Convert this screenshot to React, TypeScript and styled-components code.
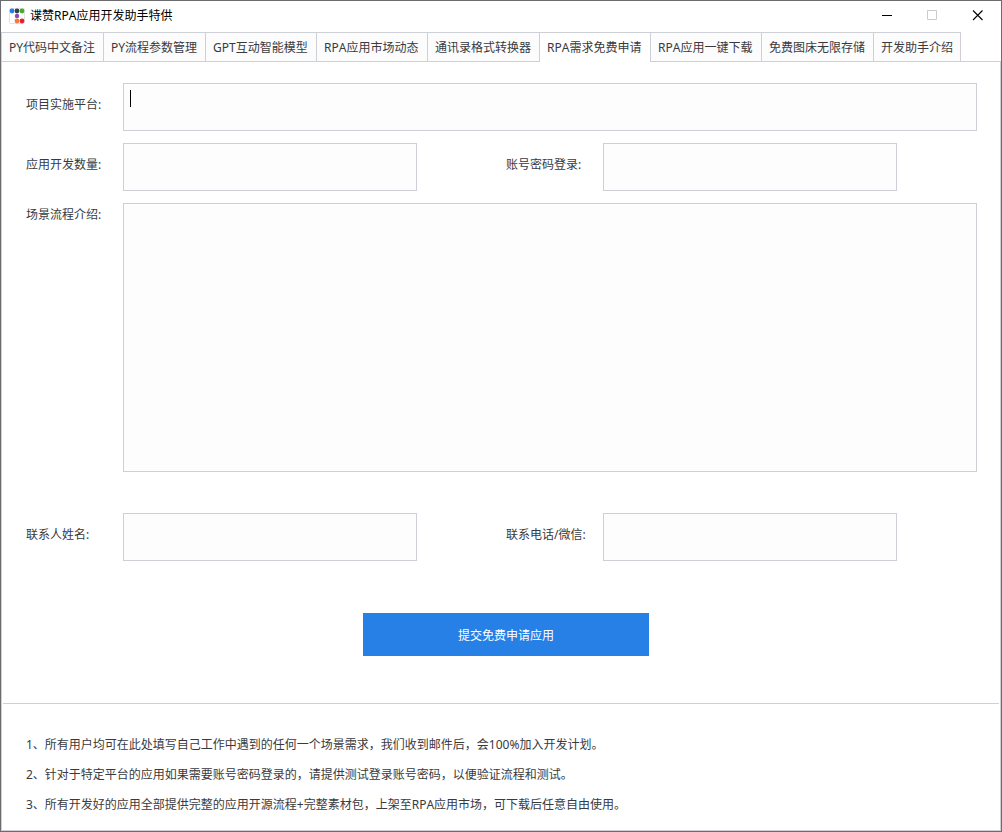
import React, { useState } from 'react';
import styled, { createGlobalStyle, css } from 'styled-components';

const GlobalStyle = createGlobalStyle`
  *, *::before, *::after { box-sizing: border-box; }
  body {
    margin: 0;
    background: #ffffff;
    color: #383a3e;
    font: 12px/18px "Noto Sans", "Noto Sans CJK SC", sans-serif;
    font-kerning: none;
  }
  button, input, textarea { font: inherit; font-kerning: inherit; color: inherit; }
`;

const line = '#cdd0d4';

const Window = styled.main`
  display: flex;
  flex-direction: column;
  min-height: 100vh;
  background: #ffffff;
  border: 1px solid #6c6c6f;
`;

const TitleBar = styled.header`
  display: flex;
  align-items: center;
  height: 31px;
  padding: 0 1px 2px 8px;
`;

const Title = styled.h1`
  flex: 1;
  margin: 0 0 0 5px;
  font-size: 12px;
  font-weight: 400;
  line-height: 18px;
  color: #000000;
`;

const WindowButton = styled.button`
  display: grid;
  place-items: center;
  width: 45px;
  height: 29px;
  padding: 0;
  border: 0;
  background: transparent;
  color: #000000;

  &:disabled { color: #cccccc; }
`;

const TabList = styled.div`
  display: flex;
  height: 30px;

  &::after {
    content: '';
    flex: 1;
    box-shadow: inset 0 -1px ${line};
  }
`;

const Tab = styled.button<{ $active: boolean; $width: number }>`
  flex: none;
  width: ${({ $width }) => $width}px;
  padding: 1px 0 0 7px;
  border: solid ${line};
  border-width: 1px 0 0 1px;
  background: #fcfcfd;
  box-shadow: inset 0 -1px ${line};
  text-align: left;
  white-space: nowrap;

  &:last-of-type { border-right-width: 1px; }

  ${({ $active }) => $active && css`
    background: #ffffff;
    box-shadow: none;
  `}
`;

const Panel = styled.section`
  flex: 1;
  border: solid ${line};
  border-width: 0 1px 1px;
`;

const Form = styled.form`
  display: grid;
  grid-template-columns: 97px 294fr 89fr 97px 294fr 80fr;
  row-gap: 12px;
  padding: 21px 23px 47px 24px;
`;

const Label = styled.label<{ $column?: number }>`
  grid-column: ${({ $column = 1 }) => $column};
  padding: 13px 0 11px;
  white-space: nowrap;
`;

const TopLabel = styled(Label)`
  padding: 3px 0;
`;

const fieldStyle = css`
  display: block;
  width: 100%;
  min-width: 0;
  height: 48px;
  padding: 6px;
  border: 1px solid ${line};
  border-radius: 0;
  outline: 0;
  background: #fdfdfd;
`;

const TextField = styled.input<{ $column: number }>`
  ${fieldStyle}
  grid-column: ${({ $column }) => $column};
`;

const PlatformField = styled.div`
  position: relative;
  grid-column: 2 / -1;
`;

const PlatformInput = styled.textarea`
  ${fieldStyle}
  resize: none;
`;

const Caret = styled.span`
  position: absolute;
  top: 7px;
  left: 7px;
  width: 1px;
  height: 17px;
  background: #000000;
`;

const Description = styled.textarea`
  ${fieldStyle}
  grid-column: 2 / -1;
  height: 269px;
  margin-bottom: 29px;
  resize: none;
`;

const Actions = styled.div`
  grid-column: 1 / -1;
  display: flex;
  justify-content: center;
  padding: 40px 0 0 9px;
`;

const SubmitButton = styled.button`
  width: 286px;
  height: 43px;
  padding: 2px 0 0;
  border: 0;
  background: #2680e5;
  color: #ffffff;
`;

const Notes = styled.footer`
  margin: 0 1px;
  padding: 26px 23px 10px;
  border-top: 1px solid ${line};
  line-height: 30px;

  p { margin: 0; }
`;

const tabs = [
  { name: 'PY代码中文备注', width: 102 },
  { name: 'PY流程参数管理', width: 102 },
  { name: 'GPT互动智能模型', width: 111 },
  { name: 'RPA应用市场动态', width: 111 },
  { name: '通讯录格式转换器', width: 112 },
  { name: 'RPA需求免费申请', width: 111 },
  { name: 'RPA应用一键下载', width: 111 },
  { name: '免费图床无限存储', width: 112 },
  { name: '开发助手介绍', width: 88 },
];

const notes = [
  '1、所有用户均可在此处填写自己工作中遇到的任何一个场景需求，我们收到邮件后，会100%加入开发计划。',
  '2、针对于特定平台的应用如果需要账号密码登录的，请提供测试登录账号密码，以便验证流程和测试。',
  '3、所有开发好的应用全部提供完整的应用开源流程+完整素材包，上架至RPA应用市场，可下载后任意自由使用。',
];

function AppIcon() {
  return (
    <svg width="16" height="16" viewBox="0 0 16 16" aria-hidden="true">
      <rect x=".5" y=".5" width="15" height="15" rx="1" fill="#fff" stroke="#e3e3e3" />
      <circle cx="3" cy="3" r="2.4" fill="#2b7de0" />
      <circle cx="8" cy="3" r="2.4" fill="#34404a" />
      <circle cx="13" cy="3" r="2.4" fill="#3fae29" />
      <circle cx="8" cy="8" r="2.2" fill="#8a4bb8" />
      <circle cx="8" cy="13" r="2.4" fill="#f5793a" />
      <circle cx="13" cy="13" r="2.4" fill="#ee1c2e" />
    </svg>
  );
}

export default function App() {
  const [active, setActive] = useState(5);

  return (
    <>
      <GlobalStyle />
      <Window>
        <TitleBar>
          <AppIcon />
          <Title>谍赞RPA应用开发助手特供</Title>
          <WindowButton type="button" aria-label="最小化">
            <svg width="11" height="11" viewBox="0 0 11 11"><path d="M0 5.5h10" stroke="currentColor" /></svg>
          </WindowButton>
          <WindowButton type="button" aria-label="最大化" disabled>
            <svg width="11" height="11" viewBox="0 0 11 11"><path d="M.5.5h9v9h-9z" fill="none" stroke="currentColor" /></svg>
          </WindowButton>
          <WindowButton type="button" aria-label="关闭">
            <svg width="11" height="11" viewBox="0 0 11 11"><path d="M1 .5l9.5 9.5M10.5.5l-9.5 9.5" stroke="currentColor" strokeWidth="1.1" /></svg>
          </WindowButton>
        </TitleBar>
        <TabList role="tablist">
          {tabs.map(({ name, width }, index) => (
            <Tab
              key={name}
              type="button"
              role="tab"
              aria-selected={index === active}
              $active={index === active}
              $width={width}
              onClick={() => setActive(index)}
            >
              {name}
            </Tab>
          ))}
        </TabList>
        <Panel role="tabpanel">
          <Form onSubmit={(event) => event.preventDefault()}>
            <Label htmlFor="platform">项目实施平台:</Label>
            <PlatformField>
              <PlatformInput id="platform" />
              <Caret />
            </PlatformField>
            <Label htmlFor="count">应用开发数量:</Label>
            <TextField id="count" $column={2} />
            <Label htmlFor="account" $column={4}>账号密码登录:</Label>
            <TextField id="account" $column={5} />
            <TopLabel htmlFor="description">场景流程介绍:</TopLabel>
            <Description id="description" />
            <Label htmlFor="contact">联系人姓名:</Label>
            <TextField id="contact" $column={2} />
            <Label htmlFor="phone" $column={4}>联系电话/微信:</Label>
            <TextField id="phone" $column={5} />
            <Actions>
              <SubmitButton type="submit">提交免费申请应用</SubmitButton>
            </Actions>
          </Form>
          <Notes>
            {notes.map((note) => <p key={note}>{note}</p>)}
          </Notes>
        </Panel>
      </Window>
    </>
  );
}
